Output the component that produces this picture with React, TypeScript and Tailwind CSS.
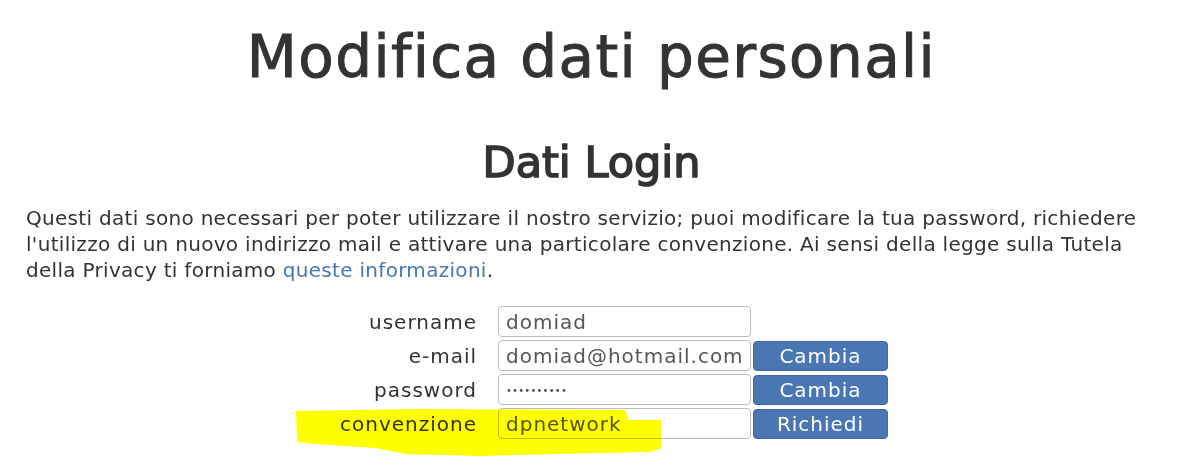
const ROWS = [
  { label: 'username', value: 'domiad', action: '' },
  { label: 'e-mail', value: 'domiad@hotmail.com', action: 'Cambia' },
  { label: 'password', value: '', action: 'Cambia' },
  { label: 'convenzione', value: 'dpnetwork', action: 'Richiedi' },
];

function Highlight() {
  return (
    <svg className="absolute left-[295px] top-[408px] pointer-events-none mix-blend-multiply" width="370" height="52" viewBox="0 0 370 52">
      <path
        d="M1 3 L120 1 L330 2 L334 12 L366 12 L366 40 L355 44 L260 46 L185 48 L110 46 L80 40 L20 36 L2 34 Z"
        fill="#ffff00"
      />
    </svg>
  );
}

export default function App() {
  return (
    <div className="relative w-[1183px] h-[474px] bg-white text-[#333] overflow-hidden" style={{ fontFamily: '"DejaVu Sans", sans-serif' }}>
      <h1 className="text-center text-[58px] tracking-[1.4px] font-normal leading-none pt-[28px] [-webkit-text-stroke:1px_#333]">Modifica dati personali</h1>
      <h2 className="text-center text-[43px] font-normal leading-none mt-[55px] [-webkit-text-stroke:1.6px_#333]">Dati Login</h2>
      <p className="px-[26px] mt-[21px] text-[20px] tracking-[0.3px] leading-[26px]">
        Questi dati sono necessari per poter utilizzare il nostro servizio; puoi modificare la tua password, richiedere<br />
        l'utilizzo di un nuovo indirizzo mail e attivare una particolare convenzione. Ai sensi della legge sulla Tutela<br />
        della Privacy ti forniamo <a className="text-[#4a76b3]">queste informazioni</a>.
      </p>
      <div className="relative mt-[23px] flex flex-col gap-[3px] text-[20px] tracking-[1px]">
        {ROWS.map(r => (
          <div key={r.label} className="flex items-center h-[31px]">
            <div className="w-[477px] text-right">{r.label}</div>
            <div className="ml-[21px] w-[253px] h-[31px] border border-[#bbb] rounded-[4px] px-[7px] flex items-center text-[#555]">
              {r.label === 'password' ? (
                <span className="text-[10px] tracking-[0.2px] pt-[1px]">••••••••••</span>
              ) : (
                r.value
              )}
            </div>
            {r.action && (
              <button className="ml-[2px] w-[135px] h-[30px] rounded-[4px] bg-[#4a77b4] border border-[#3d6aa5] text-white leading-none">
                {r.action}
              </button>
            )}
          </div>
        ))}
      </div>
      <Highlight />
    </div>
  );
}
